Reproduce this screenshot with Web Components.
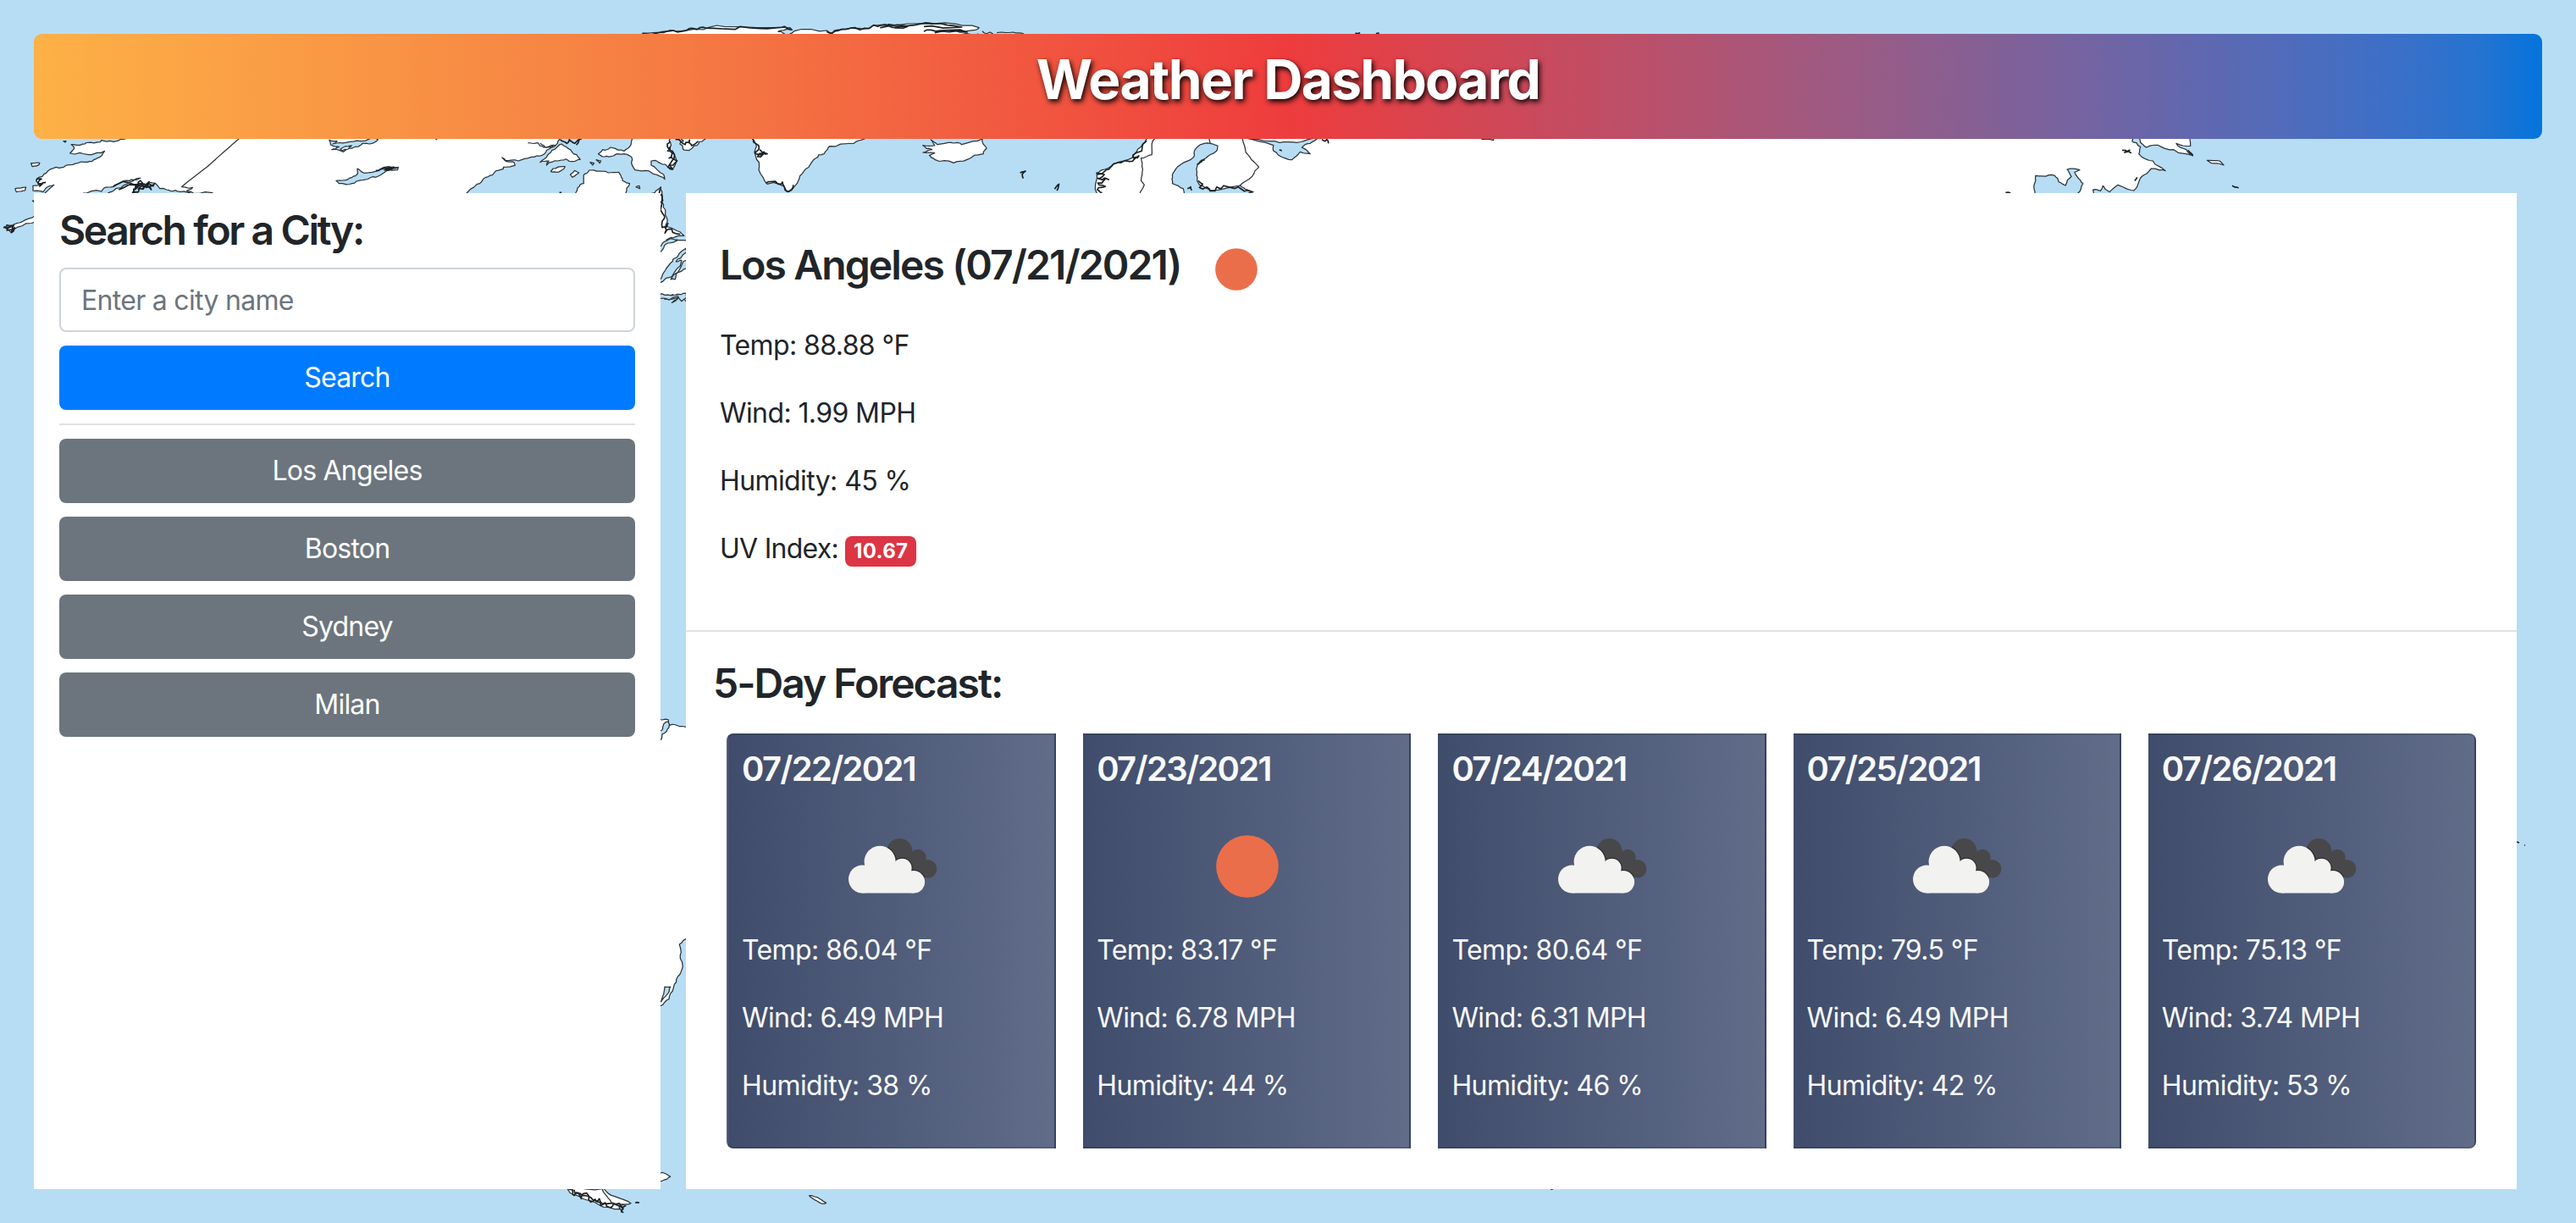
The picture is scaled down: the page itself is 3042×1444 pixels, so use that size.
<!DOCTYPE html>
<html lang="en">
<head>
<meta charset="utf-8">
<title>Weather Dashboard</title>
<style>
html,body{margin:0;height:100%}
body{background:#b7ddf4;font:400 32px/48px Inter,"Liberation Sans",sans-serif;color:#212529;overflow:hidden}
</style>
</head>
<body>
<weather-app></weather-app>
<script>
const define=(name,html,ready)=>customElements.define(name,class extends HTMLElement{
  constructor(){super();this.attachShadow({mode:'open'})}
  connectedCallback(){
    const t=document.createElement('template');
    t.innerHTML=typeof html==='function'?html(this):html;
    this.shadowRoot.append(t.content.cloneNode(true));
    if(ready)ready(this);
  }
});

/* Coastlines: each frame is [originX, originY, scaleX, scaleY]; each shape is [frame, kind, roughness, points]. */
const F={
  A:[0,0,.5102,.33333],
  B:[600,0,.63776,.33333],
  C:[1500,0,.98342,.33333],
  D:[740,180,.33333,.8061],
  E:[600,1340,.8291,.33333],
  P:[0,0,1,1]
};
const SHAPES=[
  /* Alaska and mainland Canada */
  ['A','land',1,'240,470 290,492 270,500 235,497 232,503 205,505 185,514 165,512 172,525 162,543 205,548 242,535 225,560 212,572 188,573 160,584 130,592 110,607 90,628 84,642 92,655 76,658 76,675 100,680 105,668 125,655 104,684 104,720 1070,720 1080,684 1095,665 1115,643 1120,632 1140,620 1148,605 1165,598 1165,592 1192,586 1190,575 1172,572 1162,558 1170,568 1200,570 1230,556 1255,550 1265,532 1290,508 1296,492 1296,470'],
  ['A','sea',1,'193,684 235,678 250,663 275,650 300,640 325,631 300,645 268,668 250,684 250,700 193,700'],
  ['A','sea',1,'300,690 312,672 320,655 345,645 360,650 370,668 385,672 405,674 430,680 492,683 492,700 300,700'],
  ['A','ink',2,'262,660 300,648 320,652 312,668 325,640 330,670 345,644 338,664 358,650 346,660 350,672 330,658 320,672'],
  ['A','ink',2,'275,672 310,655 335,652 318,664 308,682 322,668 340,656 356,660'],
  ['A','ink',2,'84,640 96,634 88,650 98,652 92,660 106,646'],
  ['A','line',.1,'553,492 528,525 480,590 420,662'],
  ['A','line',1,'420,662 446,664 432,676 448,684'],
  ['A','sea',1,'762,496 780,500 770,510 800,505 835,500 870,490 875,495 855,510 840,507 815,525 795,538 768,530 785,520 765,512'],
  ['A','land',1,'788,528 800,518 814,516 806,528 792,534'],
  ['A','sea',1,'827,597 842,613 880,600 890,592 922,592 920,602 900,602 870,628 840,638 815,650 785,650 778,640 800,638 815,628 828,615'],
  ['A','ink',1.2,'870,604 890,595 918,594 905,600 890,602 912,592 895,604'],
  ['A','line',1,'1222,506 1245,506 1258,522 1285,515 1262,522 1250,508'],
  ['A','line',1,'1008,492 1012,495'],
  ['A','land',1,'1300,510 1310,520 1320,530 1335,548 1343,565 1325,572 1310,563 1290,570 1265,585 1270,570 1250,575 1255,568 1270,545 1290,520'],
  ['A','land',1,'1308,590 1280,597 1275,608 1290,610'],
  ['A','land',.6,'1330,604 1340,612 1325,628 1320,618'],
  ['A','land',.4,'1366,575 1375,578 1372,585'],
  ['A','land',.4,'1380,566 1391,570 1388,578'],
  ['A','ink',2,'1297,495 1312,508 1318,494 1330,508 1345,492 1334,514'],
  ['A','land',.6,'72,578 92,577 90,584 75,590'],
  ['A','land',.6,'35,668 60,663 58,675 38,680'],
  ['A','land',.4,'147,500 153,500 151,504'],
  ['A','land',1,'84,764 65,775 40,790 28,803 10,803 25,822 40,805 84,784'],
  ['A','ink',1.5,'8,806 24,804 16,816 34,806 26,824 32,798 14,800'],
  ['A','ink',1,'75,710 80,716'],
  /* Baffin Island, Quebec, Labrador */
  ['B','land',1.2,'167,545 175,530 190,522 215,535 225,520 228,505 235,480 300,480 302,515 295,535 308,545 312,570 300,600 295,590 275,570 265,570 265,585 288,618 290,635 270,617 235,602 230,565 215,545 195,552 175,555'],
  ['B','ink',2,'300,500 295,520 306,540 298,560 313,570 300,585 305,600 296,592 308,550 300,520'],
  ['B','land',1.5,'300,480 325,500 318,510 330,532 350,515 365,492 365,480'],
  ['B','ink',1.8,'310,494 328,512 336,496 340,516 352,500'],
  ['B','land',1,'140,620 150,603 180,607 205,610 212,640 225,650 218,684 218,710 125,710 125,684 133,655 140,650'],
  ['B','land',.4,'237,662 243,658 244,668'],
  ['B','ink',1,'95,682 99,682'],
  ['B','land',1,'283,662 276,684 276,710 287,710 285,690'],
  ['D','land',1.3,'90,60 118,52 125,62 130,80 145,100 140,108 165,112 203,122 165,125 140,128 165,130 230,130 230,220 210,218 190,208 180,215 160,220 185,212 135,215 165,208 120,210 90,210'],
  ['D','ink',2,'118,54 126,70 120,84 134,96 126,110 146,104 136,118 160,112 190,120'],
  ['D','sea',1,'100,140 125,134 150,127 180,128 140,134 118,146'],
  ['D','sea',1,'100,195 125,182 140,170 165,156 212,140 212,146 175,160 195,158 160,182 140,184'],
  ['D','sea',1,'156,186 200,160 212,158 212,170 180,176 172,186'],
  ['D','sea',1,'100,212 125,207 170,209 212,206 212,212 195,218 180,210 150,216 120,214'],
  /* South America */
  ['D','land',1,'100,830 148,831 145,842 170,838 230,845 230,1150 210,1152 187,1160 190,1180 198,1190 193,1200 180,1208 165,1225 150,1240 120,1250 90,1250'],
  ['D','sea',1,'100,848 125,846 140,834 148,834 142,848 126,852 122,860 100,862'],
  ['D','sea',.8,'135,1222 155,1222 142,1234 122,1244'],
  ['D','land',.8,'100,1494 126,1494 155,1500 132,1505 120,1507 100,1507'],
  ['E','land',1,'83,185 88,205 105,225 130,248 160,262 164,275 158,255 175,242 152,218 136,190'],
  ['E','ink',2.6,'86,192 92,210 100,205 104,226 112,216 118,238 124,228 132,250 138,240 146,258 150,246 164,262 162,275'],
  ['E','ink',2.2,'94,194 104,212 112,206 120,228 130,226 140,244 168,250'],
  ['E','line',.4,'134,192 140,215 148,242 166,246'],
  ['E','ink',.8,'181,240 187,240'],
  ['E','land',.8,'429,215 437,219 445,228 453,241 450,244 440,234'],
  ['E','ink',.2,'1485,192 1488,192'],
  /* Arctic Canada and Greenland */
  ['B','land',1.2,'240,130 250,117 300,107 345,103 400,94 515,97 526,106 500,112 512,120 512,130'],
  ['B','ink',1.6,'250,119 300,110 330,108 355,98 380,100 430,94 500,98 524,104'],
  ['B','land',1.2,'515,130 530,110 590,108 600,118 620,103 650,100 680,90 740,84 830,85 872,98 865,106 830,110 870,120 870,130'],
  ['B','ink',1.5,'590,112 600,117 625,104 660,100 690,90 740,94 690,98 720,88 790,84 840,96 770,94'],
  ['B','ink',1.2,'770,112 800,108 850,114 790,116'],
  ['B','line',1,'878,110 886,120 893,114 898,121'],
  ['B','line',.5,'905,116 935,114 955,120'],
  ['C','ink',.8,'102,118 108,116'],
  ['C','ink',.8,'127,119 131,117'],
  ['B','land',1.1,'452,470 452,492 460,520 458,550 465,590 475,640 480,652 500,650 518,680 535,650 550,600 570,560 585,545 595,518 640,508 660,492 670,470'],
  ['B','ink',2.2,'454,494 464,515 457,540 474,538 462,555 480,545 466,530'],
  ['B','ink',2,'478,648 500,652 508,645 512,665 520,678 528,655'],
  ['B','land',1,'795,512 820,505 840,512 878,492 886,525 880,545 850,565 825,577 790,565 780,550 790,542 768,540 785,530 768,515 790,516 783,495'],
  ['B','ink',1,'948,612 958,606 952,618 954,632'],
  ['B','ink',1,'1012,670 1020,652 1016,675'],
  /* Scandinavia and Eurasia */
  ['B','land',1,'1090,710 1090,684 1090,615 1105,600 1130,575 1155,560 1160,545 1175,510 1185,480 1500,480 1700,480 1700,710'],
  ['C','land',1,'600,480 1035,480 1035,500 1045,520 1043,545 1060,570 1075,605 1058,597 1045,630 1037,675 1018,655 1008,680 1000,658 997,676 988,672 988,710 600,710'],
  ['P','plain',0,'1660,158 2200,158 2200,236 1660,236'],
  ['B','ink',2.2,'1182,498 1174,520 1164,540 1158,560 1168,552 1150,572 1126,578 1112,600 1090,612 1104,618 1092,632 1112,636 1092,648 1106,660 1091,672 1100,682'],
  ['B','line',.6,'1197,492 1192,510 1192,548 1172,560 1175,600 1172,640 1178,655 1170,684'],
  ['B','sea',.8,'1282,512 1300,508 1314,516 1312,535 1292,560 1277,580 1275,620 1280,655 1300,675 1355,657 1365,670 1380,680 1350,700 1252,700 1250,668 1230,650 1230,620 1240,590 1270,555 1272,530'],
  ['B','line',.3,'1298,492 1300,508'],
  ['B','ink',2,'1278,640 1286,652 1280,664 1300,676 1320,668 1352,662 1378,680'],
  ['B','ink',1.4,'1276,584 1284,568 1290,566'],
  ['B','ink',1.4,'1258,668 1264,662 1266,674'],
  ['B','line',.6,'1360,492 1366,540 1376,565 1390,592 1378,625 1355,657'],
  ['C','sea',.8,'-30,489 0,500 22,503 40,500 56,492 48,508 38,522 48,545 36,538 26,566 10,550 4,535 4,515'],
  ['C','ink',1.2,'62,494 66,500 68,494 70,508'],
  ['C','ink',1,'11,530 14,534'],
  ['C','sea',.5,'250,488 268,488 268,497 255,494'],
  ['C','ink',1.6,'1023,532 1032,532 1026,540 1034,542'],
  ['C','land',.9,'1042,480 1045,505 1052,522 1066,514 1085,530 1108,552 1100,530 1088,508 1105,517 1104,480'],
  ['C','ink',1.2,'1102,532 1108,550'],
  ['C','ink',.8,'1038,640 1041,628'],
  ['C','sea',.8,'918,700 917,660 919,622 935,620 942,622 947,645 955,657 962,625 957,600 972,602 966,610 970,630 976,650 970,684 970,700'],
  ['C','land',.6,'1125,568 1140,570 1145,585 1130,578'],
  ['C','ink',.6,'1155,658 1163,665'],
  ['C','ink',.8,'883,682 889,684'],
  /* Pacific islands */
  ['P','ink',.3,'2972,994 2975,995'],
  ['P','ink',.2,'2981,998 2982,998']
];
define('world-map',`<style>
:host{display:block;position:absolute;inset:0;z-index:-1;overflow:hidden}
svg{display:block;width:100%;height:100%}
path{stroke:#2b3338;stroke-width:1.25;stroke-linejoin:round}
.land{fill:#fff}.sea{fill:#b7ddf4}.plain{fill:#fff;stroke:none}.line{fill:none}.ink{fill:none;stroke:#1b2124;stroke-width:1.7}
</style><svg viewBox="0 0 3042 1444" preserveAspectRatio="xMidYMin slice" aria-hidden="true"></svg>`,el=>{
  let seed=7;
  const rnd=()=>{seed=(seed*16807)%2147483647;return seed/2147483647-.5};
  const svg=el.shadowRoot.querySelector('svg');
  for(const [f,kind,rough,raw] of SHAPES){
    const [ox,oy,sx,sy]=F[f];
    let p=raw.split(' ').map(s=>s.split(',').map(Number)).map(([x,y])=>[ox+x*sx,oy+y*sy]);
    const closed=kind==='land'||kind==='sea'||kind==='plain';
    for(let pass=0;pass<2;pass++){
      const out=[];
      for(let i=0;i<p.length;i++){
        out.push(p[i]);
        if(i===p.length-1&&!closed)break;
        const a=p[i],b=p[(i+1)%p.length],d=Math.hypot(b[0]-a[0],b[1]-a[1]);
        if(d<4||d>160)continue;
        const k=rough*Math.min(3.2,d*.28);
        out.push([(a[0]+b[0])/2+rnd()*k,(a[1]+b[1])/2+rnd()*k]);
      }
      p=out;
    }
    const path=document.createElementNS('http://www.w3.org/2000/svg','path');
    path.setAttribute('class',kind);
    path.setAttribute('d','M'+p.map(q=>q[0].toFixed(1)+' '+q[1].toFixed(1)).join('L')+(closed?'Z':''));
    svg.append(path);
  }
});

define('page-banner',`<style>
:host{display:block;box-sizing:border-box;height:124px;padding-top:16px;border-radius:9.6px;text-align:center;
background:linear-gradient(90deg,#fdb146,#f57a43 26%,#ee3c3d 50%,#9b5b84 72.5%,#5f68b0 86.5%,#3f6fc6 93.5%,#2573d0 97.5%,#0474dc)}
h1{margin:0;font-size:64px;line-height:76.8px;font-weight:700;letter-spacing:-1.7px;color:#fff;text-shadow:2px 3px 6px #000}
</style><h1><slot></slot></h1>`);

define('city-button',`<style>
:host{display:block}
button{display:block;width:100%;height:76px;margin:0;padding:0;border:0;border-radius:8px;background:#6c757d;color:#fff;font:inherit;line-height:76px;letter-spacing:-.8px}
:host([primary]) button{background:#007bff}
</style><button><slot></slot></button>`);

define('city-search',`<style>
:host{display:flex;flex-direction:column;gap:16px;box-sizing:border-box;width:740px;padding:16px 30px;background:#fff}
h2{margin:0;font-size:48px;line-height:56px;font-weight:600;letter-spacing:-2.4px}
input{box-sizing:border-box;width:100%;height:76px;padding:12px 24px;border:2px solid #ced4da;border-radius:8px;background:#fff;font:inherit;letter-spacing:-.7px}
input::placeholder{color:#6c757d;opacity:1}
hr{width:100%;height:2px;margin:0;border:0;background:#dee2e6}
</style>
<h2>Search for a City:</h2>
<input placeholder="Enter a city name">
<city-button primary>Search</city-button><hr>
<city-button>Los Angeles</city-button><city-button>Boston</city-button><city-button>Sydney</city-button><city-button>Milan</city-button>`);

define('weather-icon',el=>`<style>:host{display:block}svg{display:block;overflow:visible}</style>`+(el.getAttribute('kind')==='sun'
?`<svg width="${el.getAttribute('size')}" height="${el.getAttribute('size')}" viewBox="0 0 74 74"><circle cx="37" cy="37" r="36.8" fill="#eb6e4b"/></svg>`
:`<svg width="104" height="66" viewBox="0 0 104 66">
<defs><clipPath id="back"><circle cx="60.3" cy="15.2" r="15.2"/><circle cx="82" cy="22.3" r="9.6"/><circle cx="93.5" cy="35.8" r="10.8"/><path d="M60 15L82 18L94 34L92 46L70 40Z"/></clipPath></defs>
<g clip-path="url(#back)"><rect width="106" height="66" fill="#48484a"/>
<g fill="#222a2e" stroke="#2c2c2e" stroke-width="2.4"><circle cx="37.1" cy="27.3" r="18.5"/><circle cx="63.4" cy="35" r="11.2"/><circle cx="76.9" cy="51.3" r="13.2"/></g></g>
<g fill="#f2f2f0"><circle cx="16.5" cy="48" r="16.5"/><circle cx="37.1" cy="27.3" r="18.5"/><circle cx="63.4" cy="35" r="11.2"/><circle cx="76.9" cy="51.3" r="13.2"/><path d="M16.5 64.5V40L30 28H60L74 38L77 64.5Z"/></g></svg>`));

define('current-weather',`<style>
:host{display:block;box-sizing:border-box;height:518px;padding:56px 40px 0;border-bottom:2px solid #dee2e6}
header{display:flex;align-items:flex-start;height:100px}
h2{margin:0;font-size:48px;line-height:57.6px;font-weight:600;letter-spacing:-1.9px;width:585px;white-space:nowrap}
weather-icon{margin-top:9px}
p{margin:0 0 32px;letter-spacing:-.6px}
.uv{display:inline-block;vertical-align:baseline;padding:6px 10px;border-radius:8px;background:#dc3545;color:#fff;font-size:24px;line-height:24px;font-weight:700;letter-spacing:.3px}
.label{letter-spacing:-.75px}
</style>
<header><h2>Los Angeles (07/21/2021)</h2><weather-icon kind="sun" size="50"></weather-icon></header>
<p>Temp: 88.88 °F</p><p>Wind: 1.99 MPH</p><p>Humidity: 45 %</p><p><span class="label">UV Index: </span><span class="uv">10.67</span></p>`);

define('day-card',el=>`<style>
:host{display:block;box-sizing:border-box;flex:1 0 0;height:490px;padding:16px;border:2px solid rgba(0,0,0,.125);background:linear-gradient(90deg,#3f4c6b,#606c88);color:#f8f9fa}
:host(:not(:first-of-type)){border-left:0}
:host(:first-of-type){border-radius:8px 0 0 8px}
:host(:last-of-type){border-radius:0 8px 8px 0}
h3{margin:0;font-size:40px;line-height:48px;font-weight:600;letter-spacing:-1.7px}
.icon{display:flex;justify-content:center;align-items:center;height:184px;padding:0 0 3px 2px;box-sizing:border-box;margin-bottom:-18px}
p{margin:0 0 32px;letter-spacing:-.6px}
</style><h3>${el.getAttribute('date')}</h3>
<div class="icon"><weather-icon kind="${el.getAttribute('icon')}" size="74"></weather-icon></div>
<p>Temp: ${el.getAttribute('temp')} °F</p><p>Wind: ${el.getAttribute('wind')} MPH</p><p>Humidity: ${el.getAttribute('humidity')} %</p>`);

define('five-day',`<style>
:host{display:block;padding:32px 48px 0 32px}
h2{margin:0 0 30px;font-size:48px;line-height:58px;font-weight:600;letter-spacing:-2px}
.cards{display:flex;gap:32px;margin-left:16px}
</style><h2>5-Day Forecast:</h2><div class="cards">
<day-card date="07/22/2021" icon="cloud" temp="86.04" wind="6.49" humidity="38"></day-card>
<day-card date="07/23/2021" icon="sun" temp="83.17" wind="6.78" humidity="44"></day-card>
<day-card date="07/24/2021" icon="cloud" temp="80.64" wind="6.31" humidity="46"></day-card>
<day-card date="07/25/2021" icon="cloud" temp="79.5" wind="6.49" humidity="42"></day-card>
<day-card date="07/26/2021" icon="cloud" temp="75.13" wind="3.74" humidity="53"></day-card></div>`);

define('weather-app',`<style>
:host{display:flex;flex-direction:column;gap:64px;box-sizing:border-box;height:1444px;padding:40px}
.row{display:flex;gap:30px;flex:1;padding-right:30px}
main{flex:1;background:#fff}
</style><world-map></world-map><page-banner>Weather Dashboard</page-banner>
<div class="row"><city-search></city-search><main><current-weather></current-weather><five-day></five-day></main></div>`);
</script>
</body>
</html>
